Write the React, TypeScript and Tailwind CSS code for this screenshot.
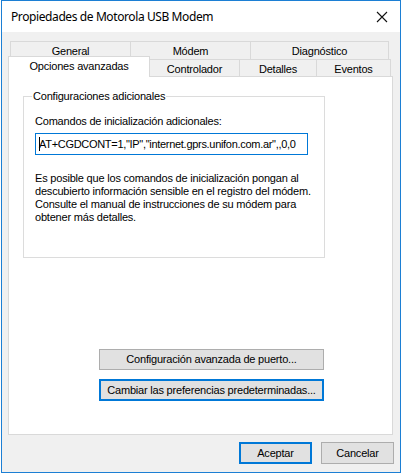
export default function App() {
  const row1 = [
    { label: "General", w: "w-[121px]" },
    { label: "Módem", w: "w-[120px]" },
    { label: "Diagnóstico", w: "w-[138px]" },
  ]
  const row2 = [
    { label: "Controlador", w: "w-[90px]" },
    { label: "Detalles", w: "w-[77px]" },
    { label: "Eventos", w: "w-[74px]" },
  ]

  return (
    <div className="w-[402px] h-[475px] bg-white pl-px font-['Liberation_Sans',Arial,sans-serif] text-[11px] tracking-[-0.2px] text-black">
      <div className="w-[400px] h-[473px] border border-[#1c7fd4] flex flex-col bg-[#f0f0f0]">
        {/* Title bar */}
        <div className="h-[31px] bg-white flex items-center justify-between pl-[9px] pr-[8px] shrink-0">
          <span className="font-['Noto_Sans',sans-serif] text-[12px] tracking-[-0.4px] leading-none">Propiedades de Motorola USB Modem</span>
          <svg width="12" height="12" viewBox="0 0 12 12" className="mr-[4px]">
            <path d="M1 1 L11 11 M11 1 L1 11" stroke="#111" strokeWidth="1.1" />
          </svg>
        </div>

        {/* Tabs */}
        <div className="flex flex-col mt-[9px] pl-[6px]">
          <div className="flex pl-[2px] h-[18px]">
            {row1.map((t, i) => (
              <div
                key={t.label}
                className={`${t.w} border-t border-[#d9d9d9] ${i === 0 ? "border-l" : ""} border-r flex items-center justify-center pt-[2px]`}
              >
                {t.label}
              </div>
            ))}
          </div>
          <div className="flex h-[18px] relative">
            <div className="w-[142px] h-[21px] -mt-[3px] bg-white border border-b-0 border-[#d9d9d9] flex items-center justify-center relative z-10 pb-[1px]">
              Opciones avanzadas
            </div>
            {row2.map((t) => (
              <div
                key={t.label}
                className={`${t.w} border-t border-r border-[#d9d9d9] flex items-center justify-center pt-[1px]`}
              >
                {t.label}
              </div>
            ))}
          </div>
          {/* Panel */}
          <div className="w-[385px] h-[359px] bg-white border border-[#d9d9d9] -mt-px pt-[13px] pl-[14px] flex flex-col">
            <fieldset className="w-[302px] h-[168px] border border-[#dcdcdc] px-[11px] pb-0 m-0 min-w-0">
              <legend className="px-[1px] -ml-[3px] leading-[13px]">Configuraciones adicionales</legend>
              <div className="mt-[12px] leading-[13px]">Comandos de inicialización adicionales:</div>
              <div className="mt-[5px] w-[273px] h-[22px] border border-[#0078d7] flex items-center pl-[3px] overflow-hidden whitespace-nowrap tracking-[-0.3px]">
                <span className="w-px h-[14px] bg-black mr-[-1px]"></span>
                AT+CGDCONT=1,"IP","internet.gprs.unifon.com.ar",,0,0
              </div>
              <p className="mt-[17px] leading-[13px] whitespace-nowrap">
                Es posible que los comandos de inicialización pongan al
                <br />
                descubierto información sensible en el registro del módem.
                <br />
                Consulte el manual de instrucciones de su módem para
                <br />
                obtener más detalles.
              </p>
            </fieldset>

            <div className="mt-[91px] ml-[76px] flex flex-col gap-[9px]">
              <button className="w-[225px] h-[21px] bg-[#e1e1e1] border border-[#adadad] flex items-center justify-center">
                Configuración avanzada de puerto...
              </button>
              <button className="w-[225px] h-[22px] bg-[#e1e1e1] border-2 border-[#0078d7] flex items-center justify-center">
                Cambiar las preferencias predeterminadas...
              </button>
            </div>
          </div>
        </div>

        {/* Footer buttons */}
        <div className="flex justify-end gap-[9px] mt-[7px] pr-[6px]">
          <button className="w-[73px] h-[22px] bg-[#e1e1e1] border-2 border-[#0078d7] flex items-center justify-center">
            Aceptar
          </button>
          <button className="w-[73px] h-[22px] bg-[#e1e1e1] border border-[#adadad] flex items-center justify-center">
            Cancelar
          </button>
        </div>
      </div>
    </div>
  )
}
